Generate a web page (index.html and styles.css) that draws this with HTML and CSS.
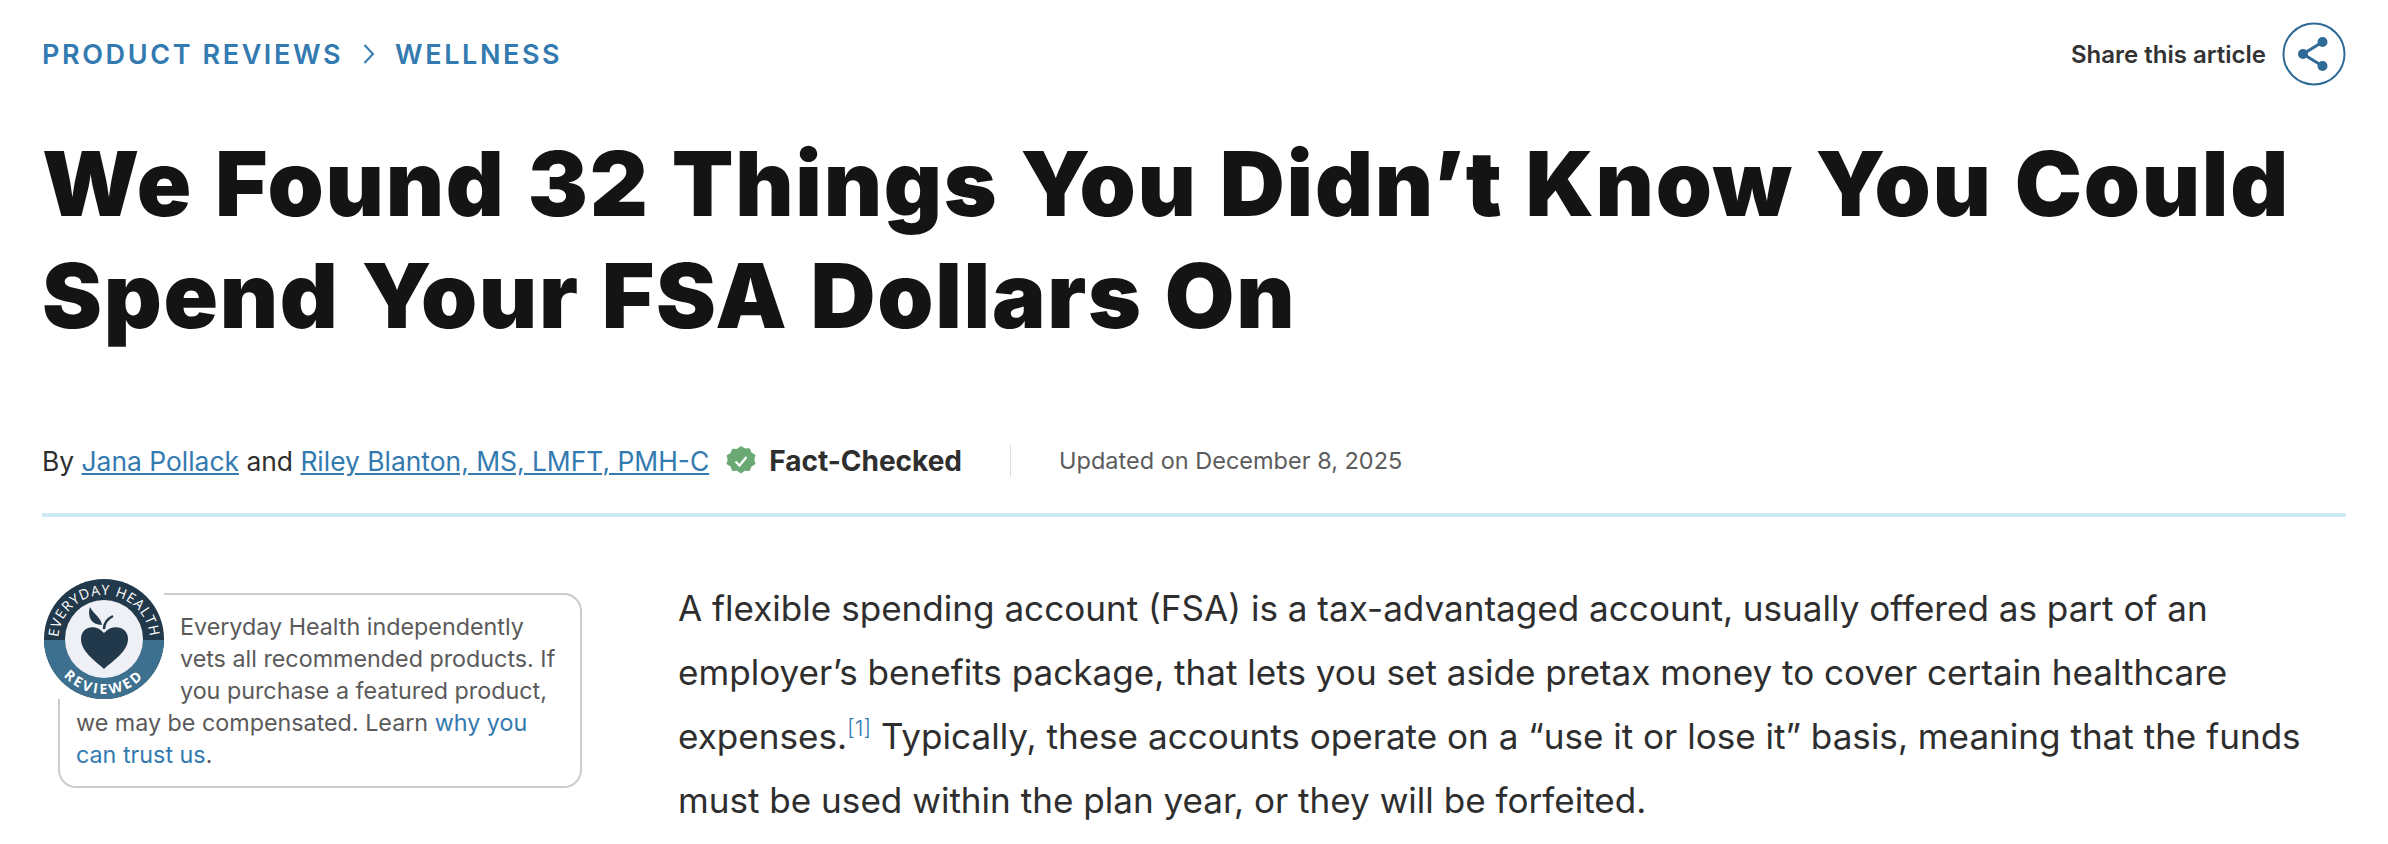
FILE: index.html
```html
<!DOCTYPE html>
<html lang="en">
<head>
<meta charset="utf-8">
<title>We Found 32 Things You Didn’t Know You Could Spend Your FSA Dollars On</title>
<link rel="stylesheet" href="styles.css">
</head>
<body>
<header class="top">
  <nav class="crumbs">
    <a href="#">PRODUCT REVIEWS</a>
    <svg class="chev" width="12" height="22" viewBox="0 0 12 22"><path d="M1.5 2 10 11 1.5 20" fill="none" stroke="#337ab0" stroke-width="2"/></svg>
    <a href="#">WELLNESS</a>
  </nav>
  <div class="share">
    <span>Share this article</span>
    <svg class="share-icon" width="64" height="64" viewBox="0 0 64 64">
      <circle cx="32" cy="32" r="30.5" fill="none" stroke="#2f6b96" stroke-width="2"/>
      <path d="M40.500 20 21 32 40.500 44" fill="none" stroke="#2f6b96" stroke-width="3"/>
      <circle cx="40.500" cy="20" r="5" fill="#2f6b96"/>
      <circle cx="21" cy="32" r="5" fill="#2f6b96"/>
      <circle cx="40.500" cy="44" r="5" fill="#2f6b96"/>
    </svg>
  </div>
</header>
<h1 class="title">We Found 32 Things You Didn’t Know You Could Spend Your FSA Dollars On</h1>
<div class="byline">
  <span>By <a href="#">Jana Pollack</a> and <a href="#">Riley Blanton, MS, LMFT, PMH-C</a></span>
  <svg class="seal" width="32" height="32" viewBox="0 0 32 32">
    <path d="M16 1l4 2.500 4.700-.3 1.800 4.400 4 2.500-1.200 4.500 1.200 4.500-4 2.500-1.800 4.400-4.700-.3-4 2.700-4-2.700-4.700.3-1.800-4.400-4-2.500 1.200-4.500L1.500 10.600l4-2.500 1.800-4.400 4.700.3z" fill="#6aa874"/>
    <path d="M10.500 16.500 14.500 20.500 21.500 12" fill="none" stroke="#fff" stroke-width="2.200"/>
  </svg>
  <strong class="fact">Fact-Checked</strong>
  <span class="updated">Updated on December 8, 2025</span>
</div>
<main class="content">
  <aside class="disclosure">
    <svg class="badge" width="120" height="120" viewBox="0 0 120 120">
      <defs>
        <clipPath id="lower"><rect x="0" y="61" width="120" height="59"/></clipPath>
        <path id="arcTop" d="M14 62A46 46 0 0 1 106 62"/>
        <path id="arcBottom" d="M5 60A55 55 0 0 0 115 60"/>
      </defs>
      <circle cx="60" cy="60" r="60" fill="#21394b"/>
      <circle cx="60" cy="60" r="60" fill="#3c708e" clip-path="url(#lower)"/>
      <circle cx="60" cy="60" r="39" fill="#eef0f5"/>
      <text class="arc-top"><textPath href="#arcTop" startOffset="50%" text-anchor="middle">EVERYDAY HEALTH</textPath></text>
      <text class="arc-bottom"><textPath href="#arcBottom" startOffset="50%" text-anchor="middle">REVIEWED</textPath></text>
      <path d="M60 90C50 81 37 72 37 60 37 48 51 44 60 54 69 44 84 48 84 60 84 72 70 81 60 90Z" fill="#21394b"/>
      <path d="M58 46C57 38 50 36 46 28 43 37 47 46 58 46Z" fill="#21394b"/>
      <path d="M60 50C60 44 63 40 69 37" fill="none" stroke="#21394b" stroke-width="2.500"/>
    </svg>
    <p>Everyday Health independently vets all recommended products. If you purchase a featured product, we may be compensated. Learn <a href="#">why you can trust us</a>.</p>
  </aside>
  <p class="lead">A flexible spending account (FSA) is a tax-advantaged account, usually offered as part of an employer’s benefits package, that lets you set aside pretax money to cover certain healthcare expenses.<sup><a href="#">[1]</a></sup> Typically, these accounts operate on a “use it or lose it” basis, meaning that the funds must be used within the plan year, or they will be forfeited.</p>
</main>
</body>
</html>
```
FILE: styles.css
```css
* { box-sizing: border-box; }
html, body { margin: 0; padding: 0; background: #fff; }
body {
  padding: 22px 42px 0;
  height: 844px;
  overflow: hidden;
  font-family: Inter, "Noto Sans", sans-serif;
  color: #2e2e2e;
}
a { color: #337ab0; }
.top { display: flex; justify-content: space-between; align-items: center; height: 64px; }
.crumbs { display: flex; align-items: center; gap: 20px; font-size: 27px; font-weight: 600; letter-spacing: 2.600px; }
.crumbs a { text-decoration: none; }
.share { display: flex; align-items: center; gap: 16px; font-size: 24px; font-weight: 600; color: #333; }
.share-icon { display: block; }
.title {
  margin: 42px 0 0;
  font-size: 90px;
  line-height: 112px;
  font-weight: 900;
  color: #141414;
  letter-spacing: 1.700px;
  word-spacing: 2.500px;
}
.byline {
  display: flex;
  align-items: center;
  margin-top: 79px;
  height: 60px;
  padding-bottom: 22px;
  font-size: 26.400px;
  border-bottom: 4px solid #cfe9f8;
  box-sizing: content-box;
}
.seal { margin: 0 12px 0 16px; }
.fact { font-weight: 700; font-size: 28px; }
.updated {
  margin-left: 48px;
  padding-left: 48px;
  border-left: 1px solid #ddd;
  font-size: 23.500px;
  color: #5c5c5c;
  line-height: 32px;
}
.content { display: flex; align-items: flex-start; margin-top: 76px; padding-left: 16px; }
.disclosure {
  flex: none;
  width: 524px;
  height: 195px;
  border: 2px solid #ccc;
  border-radius: 18px;
  padding: 16px 16px 15px;
  font-size: 23.300px;
  line-height: 32px;
  color: #5a5a5a;
}
.disclosure p { margin: 0; }
.disclosure a { text-decoration: none; }
.badge {
  float: left;
  display: block;
  margin: -32px 16px 7px -32px;
  background: #fff;
}
.arc-top { font-size: 14px; fill: #fff; letter-spacing: 0.900px; font-family: "Open Sans", sans-serif; }
.arc-bottom { font-size: 14px; font-weight: 700; fill: #fff; letter-spacing: 2.600px; font-family: "Open Sans", sans-serif; }
.lead {
  flex: 1;
  margin: -17px 0 0 96px;
  font-size: 35.100px;
  line-height: 64px;
  color: #2e2e2e;
}
.lead sup { font-size: 22px; line-height: 0; font-weight: 300; }
.lead sup a { text-decoration: none; }
```
